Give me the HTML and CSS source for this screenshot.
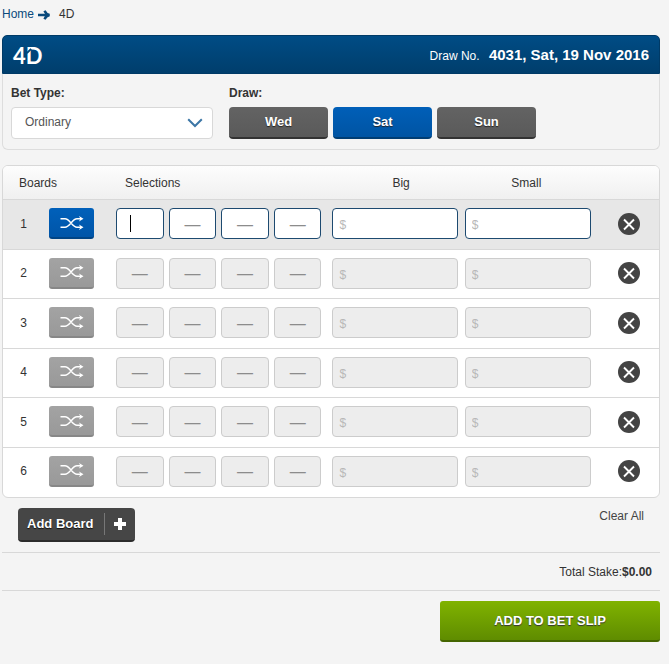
FILE: index.html
```html
<!DOCTYPE html>
<html lang="en">
<head>
    <meta charset="UTF-8">
    <meta name="viewport" content="width=device-width, initial-scale=1.0">
    <title>4D</title>
    <link rel="stylesheet" href="styles.css">
</head>
<body>
    <nav class="breadcrumb">
        <a href="#">Home</a>
        <svg class="arrow" width="13" height="10" viewBox="0 0 13 10">
            <path d="M0 5H11M6.5 0.8C7.5 3 9 4.4 11.5 5C9 5.6 7.5 7 6.5 9.2" fill="none" stroke="#0b4a7c" stroke-width="2.4"/>
        </svg>
        <span>4D</span>
    </nav>

    <section class="panel">
        <header class="panel-header">
            <h1 class="logo">4D</h1>
            <p class="draw-info">Draw No. <strong>4031, Sat, 19 Nov 2016</strong></p>
        </header>
        <div class="options">
            <div class="bet-type">
                <label class="title" for="betType">Bet Type:</label>
                <div class="select-box">
                    <select id="betType">
                        <option>Ordinary</option>
                    </select>
                    <svg class="chevron" width="16" height="10" viewBox="0 0 16 10">
                        <path d="M1.2 1.2L8 8L14.8 1.2" fill="none" stroke="#3c76a6" stroke-width="2"/>
                    </svg>
                </div>
            </div>
            <div class="draw">
                <div class="title" id="drawTitle">Draw:</div>
                <div class="days" role="group" aria-labelledby="drawTitle">
                    <button type="button" class="day">Wed</button>
                    <button type="button" class="day selected">Sat</button>
                    <button type="button" class="day">Sun</button>
                </div>
            </div>
        </div>
    </section>

    <div class="boards">
        <table>
            <thead>
                <tr>
                    <th class="col-board">Boards</th>
                    <th class="col-selections">Selections</th>
                    <th class="col-big">Big</th>
                    <th class="col-small">Small</th>
                    <th class="col-delete"></th>
                </tr>
            </thead>
            <tbody id="boardRows">
                <!-- Boards will be inserted here dynamically -->
            </tbody>
        </table>
    </div>

    <div class="board-actions">
        <button type="button" class="add-board" onclick="addBoard()">
            <span>Add Board</span>
            <svg width="12" height="12" viewBox="0 0 12 12">
                <path d="M4 0h4v4h4v4h-4v4h-4v-4h-4v-4h4z" fill="#fff"/>
            </svg>
        </button>
        <a class="clear-all" href="#">Clear All</a>
    </div>
    <p class="total">Total Stake:<strong>$0.00</strong></p>
    <div class="submit-row">
        <button type="button" class="bet-slip">ADD TO BET SLIP</button>
    </div>

    <script>
        let boardCount = 0;

        function addBoard() {
            boardCount++;
            const n = boardCount;
            const off = n === 1 ? '' : 'disabled';
            let digits = '';
            for (let i = 1; i <= 4; i++) {
                const caret = n === 1 && i === 1;
                digits += `<input type="text" class="digit ${caret ? 'current' : ''}" maxlength="1" placeholder="${caret ? '' : '—'}" aria-label="Board ${n} digit ${i}" ${off}>`;
            }
            const row = document.createElement('tr');
            if (n === 1) {
                row.className = 'active';
            }
            row.innerHTML = `
                <th scope="row">
                    <div class="board-cell">
                        <span class="number">${n}</span>
                        <button type="button" class="shuffle" aria-label="Quick pick for board ${n}" ${off}>
                            <svg width="24" height="14" viewBox="0 0 24 14">
                                <path d="M0.5 2.8H5C10 2.8 12 11.2 17 11.2H21M0.5 11.2H5C10 11.2 12 2.8 17 2.8H21" fill="none" stroke="#fff" stroke-width="1.4"/>
                                <path d="M19 0L23.5 2.8L19 5.6L20.3 2.8ZM19 8.4L23.5 11.2L19 14L20.3 11.2Z" fill="#fff"/>
                            </svg>
                        </button>
                    </div>
                </th>
                <td><div class="digits">${digits}</div></td>
                <td class="big"><input type="text" class="amount" placeholder="$" aria-label="Board ${n} big" ${off}></td>
                <td class="small"><input type="text" class="amount" placeholder="$" aria-label="Board ${n} small" ${off}></td>
                <td class="remove-cell">
                    <button type="button" class="remove" aria-label="Clear board ${n}">
                        <svg width="22" height="22" viewBox="0 0 22 22">
                            <circle cx="11" cy="11" r="11" fill="#444"/>
                            <path d="M6 6.5L16 16.5M16 6.5L6 16.5" stroke="#fff" stroke-width="1.9"/>
                        </svg>
                    </button>
                </td>
            `;
            document.getElementById('boardRows').appendChild(row);
        }

        for (let i = 0; i < 6; i++) {
            addBoard();
        }
    </script>
</body>
</html>
```
FILE: styles.css
```css
* {
    box-sizing: border-box;
}
body {
    font-family: Arial, "Liberation Sans", sans-serif;
    font-size: 12px;
    line-height: 16px;
    color: #333;
    background-color: #f4f4f4;
    margin: 0;
    padding: 6px 9px 0 2px;
}
h1, p {
    margin: 0;
}
a {
    color: #0b4a7c;
    text-decoration: none;
}
button, input, select {
    font-family: inherit;
    font-size: 12px;
    margin: 0;
}
button {
    border: none;
    padding: 0;
    cursor: pointer;
}
.breadcrumb {
    display: flex;
    align-items: center;
    margin-bottom: 13px;
}
.breadcrumb .arrow {
    margin: 1px 8px 0 4px;
}
.panel {
    border: 1px solid #ddd;
    border-top: none;
    border-radius: 6px;
    margin-bottom: 15px;
}
.panel-header {
    display: flex;
    align-items: center;
    justify-content: space-between;
    height: 39px;
    margin: 0 -1px;
    padding: 2px 10px 0;
    color: white;
    background: linear-gradient(#004c85, #003e6c);
    border: 1px solid #003a66;
    border-radius: 5px 5px 0 0;
}
.logo {
    position: relative;
    font-family: Lato, sans-serif;
    font-size: 22px;
    line-height: 24px;
    font-weight: bold;
}
/* slanted cut in the corner of the D */
.logo::after {
    content: "";
    position: absolute;
    left: 13px;
    top: 6px;
    width: 6px;
    height: 2px;
    background-color: #004678;
    transform: rotate(-45deg);
}
.draw-info strong {
    font-size: 15px;
    margin-left: 6px;
}
.options {
    display: flex;
    gap: 16px;
    padding: 11px 8px 10px;
}
.title {
    display: block;
    font-weight: bold;
    margin-bottom: 6px;
}
.bet-type {
    width: 202px;
}
.select-box {
    position: relative;
}
.select-box select {
    appearance: none;
    width: 100%;
    height: 32px;
    padding: 0 30px 2px 13px;
    color: #555;
    background-color: white;
    border: 1px solid #d8d8d8;
    border-radius: 4px;
}
.chevron {
    position: absolute;
    right: 10px;
    top: 11px;
    pointer-events: none;
}
.days {
    display: flex;
    gap: 5px;
}
.day {
    width: 99px;
    height: 32px;
    padding-bottom: 2px;
    font-size: 13px;
    font-weight: bold;
    color: white;
    text-shadow: 0 1px 1px #222;
    background: linear-gradient(#636363, #5a5a5a);
    border-bottom: 2px solid #333;
    border-radius: 4px;
}
.day.selected {
    background: linear-gradient(#005fb8, #0054a3);
    border-bottom-color: #003d73;
}
.boards {
    background-color: white;
    border: 1px solid #d8d8d8;
    border-radius: 6px;
    overflow: hidden;
}
table {
    width: 100%;
    table-layout: fixed;
    border-collapse: separate;
    border-spacing: 0;
}
th, td {
    padding: 0;
    font-weight: normal;
    text-align: left;
}
thead th {
    height: 33px;
    background: linear-gradient(#fdfdfd, #f0f0f0);
}
tbody th, tbody td {
    height: 50px;
    padding-bottom: 2px;
    border-top: 1px solid #d8d8d8;
}
tbody tr:nth-child(even) > * {
    height: 49px;
}
tbody tr:last-child > * {
    height: 50px;
    padding-bottom: 3px;
}
.active > * {
    background-color: #e7e7e7;
}
.col-board {
    width: 113px;
    padding-left: 16px;
}
.col-selections {
    width: 33%;
    padding-left: 9px;
}
.col-big {
    padding-left: 8px;
    text-align: center;
}
.col-small {
    text-align: center;
}
.col-delete {
    width: 68px;
}
.board-cell {
    display: flex;
    align-items: center;
    gap: 12px;
    padding-left: 7px;
}
.number {
    width: 27px;
    text-align: center;
}
.shuffle {
    display: flex;
    align-items: center;
    justify-content: center;
    width: 45px;
    height: 31px;
    background: linear-gradient(#a3a3a3, #999);
    border-bottom: 2px solid #878787;
    border-radius: 3px;
}
.active .shuffle {
    background: linear-gradient(#0060ba, #0055a8);
    border-bottom-color: #004485;
}
.digits {
    display: grid;
    grid-template-columns: repeat(4, 1fr);
    gap: 5px;
    padding-right: 11px;
}
.digit, .amount {
    display: block;
    width: 100%;
    min-width: 0;
    height: 31px;
    color: #333;
    background-color: #ededed;
    border: 1px solid #ccc;
    border-radius: 4px;
    outline: none;
}
.active .digit, .active .amount {
    background-color: white;
    border-color: #1d4a70;
}
.digit {
    padding: 2px 0 0;
    font-size: 16px;
    text-align: center;
}
.digit::placeholder {
    color: #8c8c8c;
}
.active .digit.current {
    background: linear-gradient(#000, #000) 13px 6px / 1px 17px no-repeat white;
}
.amount {
    padding: 3px 6px 0;
}
.amount::placeholder {
    color: #b8b8b8;
}
.big {
    padding-right: 4px;
}
.small {
    padding-left: 3px;
}
.remove-cell {
    padding-left: 27px;
}
.remove {
    display: block;
    height: 22px;
    background: none;
}
.remove svg {
    display: block;
}
.board-actions {
    display: flex;
    align-items: flex-start;
    justify-content: space-between;
    padding: 10px 16px;
}
.add-board {
    display: flex;
    align-items: center;
    height: 34px;
    padding: 0 9px;
    font-size: 13px;
    font-weight: bold;
    color: white;
    text-shadow: 0 1px 1px #111;
    background-color: #464646;
    border-bottom: 2px solid #2c2c2c;
    border-radius: 4px;
}
.add-board span {
    line-height: 22px;
    padding-right: 11px;
    margin-right: 9px;
    border-right: 1px solid #777;
}
.clear-all {
    color: #444;
}
.total {
    padding: 11px 8px 10px;
    text-align: right;
    border-top: 1px solid #d8d8d8;
    border-bottom: 1px solid #d8d8d8;
}
.submit-row {
    display: flex;
    justify-content: flex-end;
    padding: 10px 0;
}
.bet-slip {
    width: 220px;
    height: 41px;
    font-size: 13px;
    font-weight: bold;
    color: white;
    text-shadow: 0 1px 1px #333;
    background: linear-gradient(#80b300, #5f8c00);
    border-bottom: 2px solid #446500;
    border-radius: 3px;
}
```
